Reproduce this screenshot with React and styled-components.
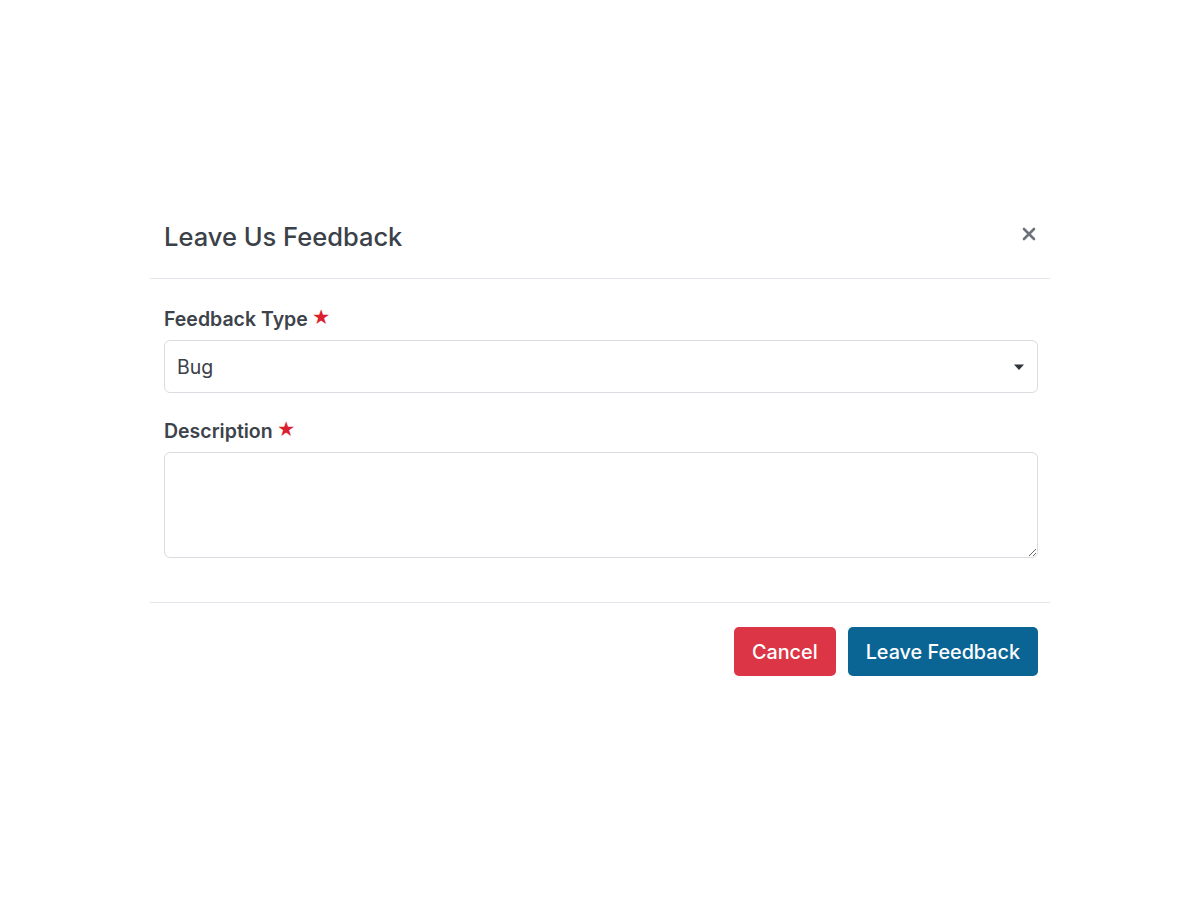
import styled, { createGlobalStyle } from "styled-components"

const GlobalStyle = createGlobalStyle`
    html, body {
        margin: 0;
        padding: 0;
        background: #fff;
        font-family: Inter, "Noto Sans", sans-serif;
    }
`

const Page = styled.div`
    display: flex;
    justify-content: center;
    padding-top: 200px;
    height: 900px;
    box-sizing: border-box;
`

const Modal = styled.section`
    width: 900px;
    background: #fff;
`

const Header = styled.header`
    display: flex;
    align-items: center;
    justify-content: space-between;
    padding: 20px 14px 24px 14px;
    border-bottom: 1.5px solid #e3e6ea;
`

const Title = styled.h2`
    margin: 0;
    font-size: 25.5px;
    font-weight: 500;
    line-height: 34px;
    color: #3b4149;
`

const CloseButton = styled.button`
    border: 0;
    background: none;
    padding: 0;
    margin: 0 0 6px 0;
    display: flex;
    color: #6d737a;
    cursor: pointer;
`

const Body = styled.div`
    display: flex;
    flex-direction: column;
    padding: 28px 12px 44px 14px;
    border-bottom: 1.5px solid #e3e6ea;
`

const Label = styled.label`
    display: flex;
    align-items: center;
    gap: 4px;
    font-size: 19.5px;
    font-weight: 600;
    line-height: 24px;
    color: #3d434b;
    margin-bottom: 9px;
`

const Star = styled.span`
    color: #dc1f2e;
    font-size: 18px;
    line-height: 1;
    margin-top: -3px;
`

const SelectBox = styled.div`
    display: flex;
    align-items: center;
    justify-content: space-between;
    height: 53px;
    box-sizing: border-box;
    padding: 0 12px 0 12px;
    border: 1.5px solid #d9dce0;
    border-radius: 6px;
    font-size: 19.5px;
    color: #3b4149;
    margin-bottom: 26px;
`

const TextArea = styled.textarea`
    height: 106px;
    box-sizing: border-box;
    border: 1.5px solid #d9dce0;
    border-radius: 6px;
    font-family: inherit;
    font-size: 19px;
    padding: 10px 12px;
    resize: vertical;
    outline: none;
`

const Footer = styled.footer`
    display: flex;
    justify-content: flex-end;
    gap: 12px;
    padding: 24px 12px 24px 14px;
`

const Button = styled.button`
    height: 49px;
    padding: 0 18px;
    border: 0;
    border-radius: 5px;
    font-family: inherit;
    font-size: 19.8px;
    font-weight: 500;
    color: #fff;
    background: ${p => p.$bg};
    cursor: pointer;
`

const Caret = () => (
    <svg width="12" height="8" viewBox="0 0 12 8">
        <path d="M1 1.5h10L6 7z" fill="#2f343a" />
    </svg>
)

const CloseIcon = () => (
    <svg width="14" height="14" viewBox="0 0 14 14">
        <path d="M2 2l10 10M12 2L2 12" stroke="currentColor" strokeWidth="2.6" strokeLinecap="round" />
    </svg>
)

export default function App() {
    return (
        <>
            <GlobalStyle />
            <Page>
                <Modal>
                    <Header>
                        <Title>Leave Us Feedback</Title>
                        <CloseButton aria-label="Close"><CloseIcon /></CloseButton>
                    </Header>
                    <Body>
                        <Label>Feedback Type<Star>★</Star></Label>
                        <SelectBox>
                            <span>Bug</span>
                            <Caret />
                        </SelectBox>
                        <Label>Description<Star>★</Star></Label>
                        <TextArea />
                    </Body>
                    <Footer>
                        <Button $bg="#dc3545">Cancel</Button>
                        <Button $bg="#0a6595">Leave Feedback</Button>
                    </Footer>
                </Modal>
            </Page>
        </>
    )
}
